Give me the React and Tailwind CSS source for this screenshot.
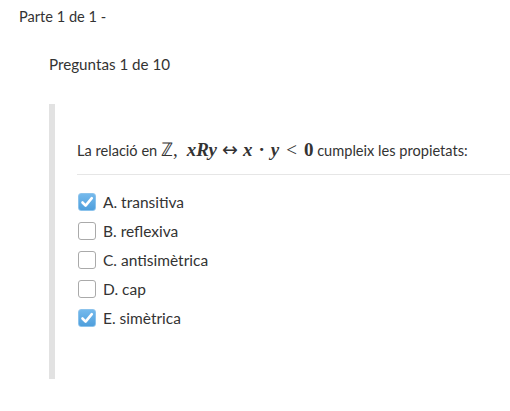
import { useState } from "react";

function Check({ checked }) {
  if (checked) {
    return (
      <span className="w-[18px] h-[18px] rounded-[3px] bg-[linear-gradient(#74b9ec,#4f9fdc)] flex items-center justify-center border border-[#8cc3ec]">
        <svg width="14" height="14" viewBox="0 0 14 14">
          <path d="M2.5 7.5 L5.6 10.6 L11.8 3.2" fill="none" stroke="#fff" strokeWidth="2.6" strokeLinecap="round" strokeLinejoin="round" />
        </svg>
      </span>
    );
  }
  return <span className="w-[18px] h-[18px] rounded-[3px] bg-white border border-[#aaaaaa]" />;
}

function App() {
  const [answers, setAnswers] = useState([
    { id: "A", label: "A. transitiva", checked: true },
    { id: "B", label: "B. reflexiva", checked: false },
    { id: "C", label: "C. antisimètrica", checked: false },
    { id: "D", label: "D. cap", checked: false },
    { id: "E", label: "E. simètrica", checked: true },
  ]);

  const toggle = (id) =>
    setAnswers(answers.map((a) => (a.id === id ? { ...a, checked: !a.checked } : a)));

  const math = "font-['Liberation_Serif',serif] text-[19px]";

  return (
    <div className="w-[510px] h-[411px] bg-white text-[#333] font-['Lato','Liberation_Sans',sans-serif] text-[14px] overflow-hidden">
      <div className="pl-[19px] pt-[8px] leading-[18px] text-[14.6px]">Parte 1 de 1 -</div>
      <div className="pl-[49px] pt-[29px] leading-[18px] text-[15.2px]">Preguntas 1 de 10</div>
      <div className="ml-[49px] mt-[31px] h-[275px] border-l-[6px] border-[#e2e2e2] pl-[22px] pt-[34px]">
        {/* Question */}
        <div className="flex items-baseline whitespace-nowrap leading-[22px] text-[14.6px]">
          <span>La relació en&nbsp;</span>
          <span className={math}>
            <span>ℤ</span>
            <span>,</span>
            <span className="italic font-bold ml-[9px]">xRy</span>
            <span className="mx-[5px] font-['DejaVu_Sans',sans-serif] text-[19px]">↔</span>
            <span className="italic font-bold">x</span>
            <span className="mx-[6px] font-bold">·</span>
            <span className="italic font-bold">y</span>
            <span className="mx-[7px]">&lt;</span>
            <span className="font-bold">0</span>
          </span>
          <span>&nbsp;cumpleix les propietats:</span>
        </div>
        <div className="mt-[12px] h-px bg-[#e6e6e6]" />
        {/* Answers */}
        <div className="mt-[18px] flex flex-col gap-[11px] pl-[1px]">
          {answers.map((a) => (
            <div key={a.id} className="flex items-center gap-[7px] h-[18px] cursor-pointer" onClick={() => toggle(a.id)}>
              <Check checked={a.checked} />
              <span className="leading-[18px] text-[15.5px]">{a.label}</span>
            </div>
          ))}
        </div>
      </div>
    </div>
  );
}

export default App;
